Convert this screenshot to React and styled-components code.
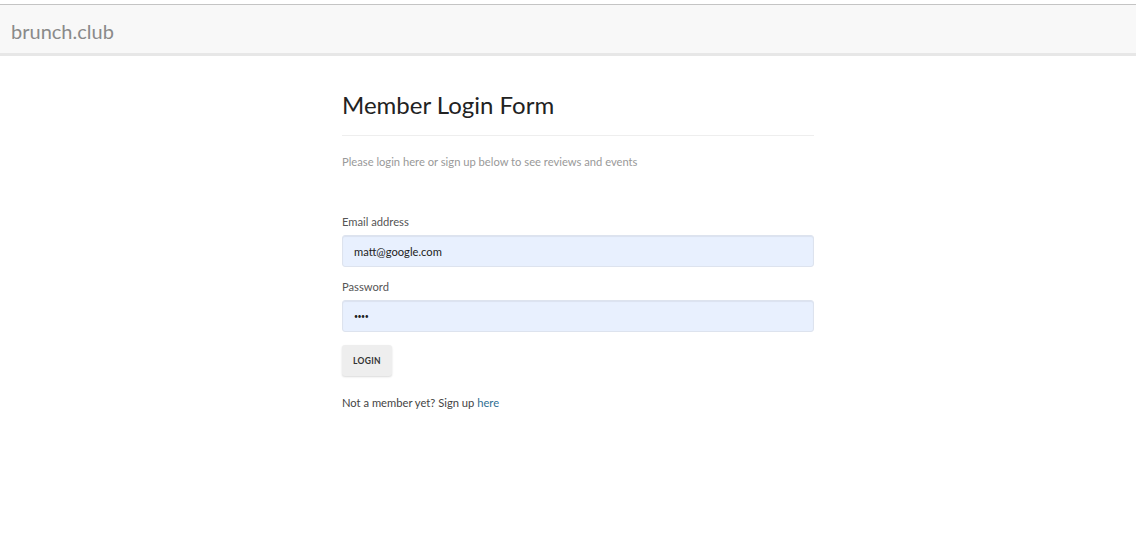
import React, { useState } from 'react';
import styled, { createGlobalStyle } from 'styled-components';

const GlobalStyle = createGlobalStyle`
  body {
    margin: 0;
    background: #fff;
    font-family: Lato, "Open Sans", Arial, sans-serif;
  }
`;

const LoginPage = () => {
  const [email, setEmail] = useState('matt@google.com');
  const [password, setPassword] = useState('1234');

  return (
    <main>
      <GlobalStyle />
      <Navbar>
        <Brand>brunch.club</Brand>
      </Navbar>
      <Container>
        <Column>
          <Title>Member Login Form</Title>
          <Divider />
          <Lead>Please login here or sign up below to see reviews and events</Lead>
          <Form onSubmit={(e) => e.preventDefault()}>
            <Field>
              <Label>Email address</Label>
              <Input type="email" value={email} onChange={(e) => setEmail(e.target.value)} />
            </Field>
            <Field>
              <Label>Password</Label>
              <Input
                type="password"
                $masked
                value={password}
                onChange={(e) => setPassword(e.target.value)}
              />
            </Field>
            <LoginButton type="submit">Login</LoginButton>
          </Form>
          <Note>
            Not a member yet? Sign up <Link href="#">here</Link>
          </Note>
        </Column>
      </Container>
    </main>
  );
};

const Navbar = styled.nav`
  margin-top: 4px;
  height: 48px;
  display: flex;
  align-items: center;
  padding: 0 11px;
  background: #f8f8f8;
  border-top: 1px solid #c4c4c4;
  border-bottom: 3px solid #e7e7e7;
`;

const Brand = styled.a`
  font-size: 20px;
  color: #8a8a8a;
  margin-top: 4px;
`;

const Container = styled.div`
  display: flex;
  padding: 31px 0 0 342px;
`;

const Column = styled.div`
  width: 472px;
`;

const Title = styled.h1`
  margin: 0;
  font-size: 24px;
  font-weight: 400;
  line-height: 36px;
  color: #222;
`;

const Divider = styled.hr`
  margin: 12px 0 18px;
  border: 0;
  border-top: 1px solid #eee;
`;

const Lead = styled.p`
  margin: 0;
  font-size: 11.2px;
  line-height: 16px;
  color: #999;
`;

const Form = styled.form`
  display: flex;
  flex-direction: column;
  gap: 12px;
  margin-top: 44px;
  align-items: flex-start;
`;

const Field = styled.div`
  display: flex;
  flex-direction: column;
  gap: 5px;
  width: 100%;
`;

const Label = styled.label`
  font-size: 11.2px;
  line-height: 16px;
  color: #555;
`;

const Input = styled.input`
  box-sizing: border-box;
  width: 100%;
  height: 32px;
  padding: 0 11px;
  font-family: inherit;
  font-size: ${(p) => (p.$masked ? '7px' : '11.2px')};
  letter-spacing: ${(p) => (p.$masked ? '-0.5px' : 'normal')};
  color: #222;
  background: #e8f0fe;
  border: 1px solid #dde3ee;
  border-radius: 3px;
  box-shadow: inset 0 1px 1px rgba(0, 0, 0, 0.06);
  outline: none;
`;

const LoginButton = styled.button`
  margin-top: 1px;
  width: 50px;
  height: 31px;
  font-family: inherit;
  font-size: 8.5px;
  font-weight: 700;
  letter-spacing: 0.3px;
  text-transform: uppercase;
  color: #333;
  background: #eee;
  border: none;
  border-radius: 3px;
  box-shadow: 0 1px 2px rgba(0, 0, 0, 0.15);
  cursor: pointer;
`;

const Note = styled.p`
  margin: 19px 0 0;
  font-size: 11.2px;
  line-height: 16px;
  color: #444;
`;

const Link = styled.a`
  color: #2f7094;
  text-decoration: none;
`;

export default LoginPage;
